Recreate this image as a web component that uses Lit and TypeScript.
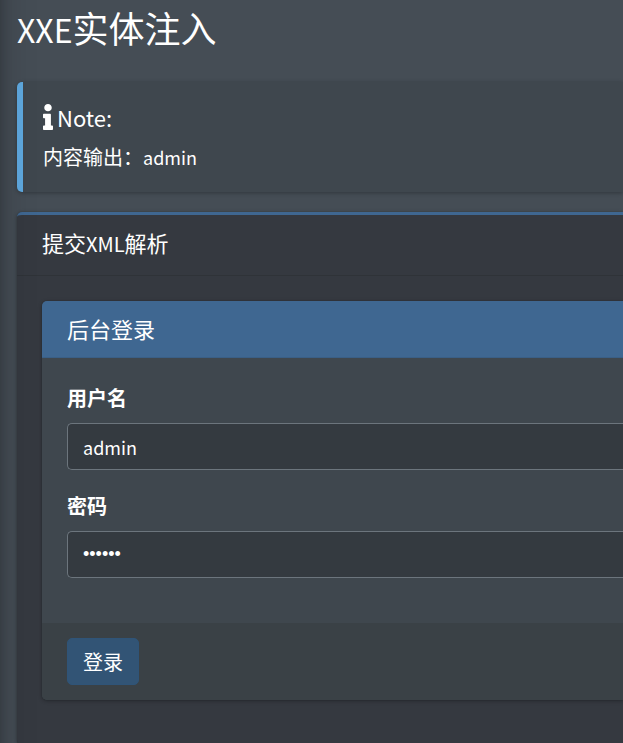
import { LitElement, html, css } from "lit";
import { customElement } from "lit/decorators.js";

@customElement("app-root")
export class AppRoot extends LitElement {
  static styles = css`
    :host {
      display: block;
      position: relative;
      overflow: hidden;
      min-height: 100vh;
      box-sizing: border-box;
      padding-left: 17px;
      background: #454d55;
      color: #fff;
      font-family: "Noto Sans CJK SC", "Noto Sans", sans-serif;
      font-size: 20px;
      line-height: 30px;
    }
    *,
    *::before,
    *::after {
      box-sizing: border-box;
    }
    .edge {
      position: absolute;
      z-index: 2;
      top: -60px;
      bottom: -60px;
      left: -20px;
      width: 20px;
      pointer-events: none;
      box-shadow: 0 18px 35px rgba(0, 0, 0, 0.25), 0 12px 12px rgba(0, 0, 0, 0.22);
    }
    h1,
    h2,
    h3,
    p {
      margin: 0;
      font-weight: 400;
    }
    .latin {
      font-size: 18px;
    }
    .title {
      padding: 5px 0 31px;
      font-size: 36px;
      line-height: 44px;
    }
    .title .latin {
      font-size: 32px;
    }
    .callout {
      margin-bottom: 20px;
      padding: 20px;
      border-left: 6px solid #5fa9e0;
      border-radius: 5px 0 0 5px;
      background: #3f474e;
      box-shadow: 0 1px 4px rgba(0, 0, 0, 0.3);
    }
    .note {
      display: flex;
      align-items: center;
      gap: 4px;
      margin-bottom: 10px;
      font-size: 22px;
      line-height: 30px;
    }
    .info {
      width: 10px;
      height: 26px;
      fill: #fff;
    }
    .panel {
      border-top: 3px solid #3f6791;
      border-radius: 5px 0 0 5px;
      background: #353940;
      box-shadow: 0 0 1px rgba(0, 0, 0, 0.3), 0 1px 4px rgba(0, 0, 0, 0.3);
    }
    .panel-head {
      padding: 12px 25px 16px;
      border-bottom: 1px solid #2f3338;
      font-size: 22px;
      line-height: 30px;
    }
    .panel-head .latin {
      font-size: 20px;
    }
    .panel-body {
      padding: 25px 0 45px 25px;
    }
    .card {
      overflow: hidden;
      border-radius: 5px 0 0 5px;
      background: #3f474e;
      box-shadow: 0 0 1px rgba(0, 0, 0, 0.3), 0 1px 4px rgba(0, 0, 0, 0.3);
    }
    .card-head {
      padding: 12px 25px 14px;
      border-bottom: 1px solid #3a5f86;
      background: #3f6791;
      font-size: 22px;
      line-height: 30px;
    }
    .card-body {
      padding: 25px 0 45px 25px;
    }
    .field + .field {
      margin-top: 21px;
    }
    .label {
      display: block;
      margin-bottom: 10px;
      font-weight: 700;
    }
    .input {
      display: block;
      width: 100%;
      height: 47px;
      margin: 0;
      padding: 8px 15px;
      border: 1px solid #6c757d;
      border-right: 0;
      border-radius: 5px 0 0 5px;
      outline: 0;
      background: #343a40;
      color: #fff;
      font-family: inherit;
      font-size: 18px;
    }
    .input[type="password"] {
      font-family: "Liberation Sans", sans-serif;
    }
    .card-foot {
      padding: 15px 25px;
      background: #3a4146;
    }
    .submit {
      display: block;
      height: 47px;
      padding: 0 15px;
      border: 1px solid #2f5478;
      border-radius: 5px;
      background: #325475;
      color: #fff;
      font-family: inherit;
      font-size: 20px;
      line-height: 30px;
    }
  `;

  render() {
    return html`
      <div class="edge"></div>
      <h1 class="title"><span class="latin">XXE</span>实体注入</h1>
      <section class="callout">
        <h2 class="note">
          <svg class="info" viewBox="0 0 192 512" preserveAspectRatio="none" aria-hidden="true">
            <path
              d="M20 424h20V280H20c-11 0-20-9-20-20v-48c0-11 9-20 20-20h112c11 0 20 9 20 20v212h20c11 0 20 9 20 20v48c0 11-9 20-20 20H20c-11 0-20-9-20-20v-48c0-11 9-20 20-20zM96 0C56 0 24 32 24 72s32 72 72 72 72-32 72-72S136 0 96 0z"
            ></path>
          </svg>
          <span class="note-text">Note:</span>
        </h2>
        <p>内容输出：<span class="latin">admin</span></p>
      </section>
      <section class="panel">
        <h2 class="panel-head">提交<span class="latin">XML</span>解析</h2>
        <div class="panel-body">
          <form class="card" @submit=${(e: Event) => e.preventDefault()}>
            <h3 class="card-head">后台登录</h3>
            <div class="card-body">
              <div class="field">
                <label class="label" for="user">用户名</label>
                <input class="input" id="user" type="text" .value=${"admin"} />
              </div>
              <div class="field">
                <label class="label" for="pass">密码</label>
                <input class="input" id="pass" type="password" .value=${"123456"} />
              </div>
            </div>
            <div class="card-foot">
              <button class="submit" type="submit">登录</button>
            </div>
          </form>
        </div>
      </section>
    `;
  }
}
